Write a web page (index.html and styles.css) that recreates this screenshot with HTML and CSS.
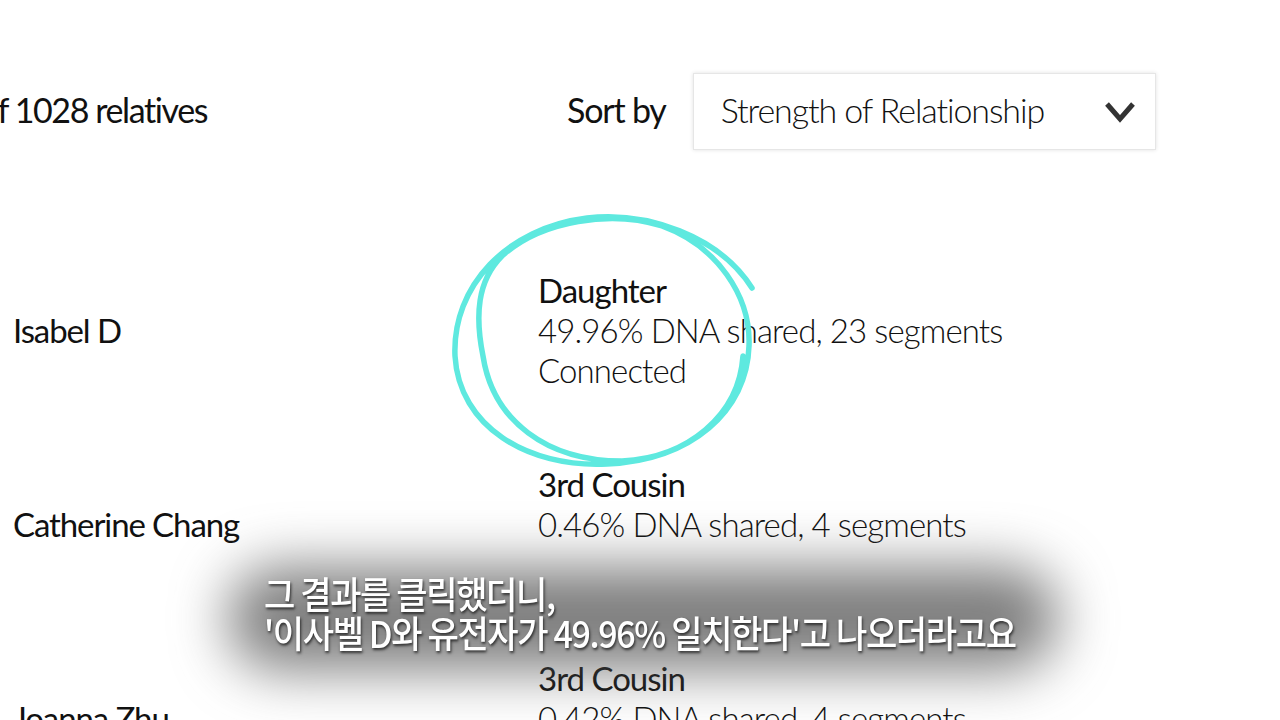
FILE: index.html
```html
<!DOCTYPE html>
<html lang="en">
<head>
<meta charset="utf-8">
<link rel="stylesheet" href="styles.css">
</head>
<body>
<div class="page">
  <header class="toolbar">
    <div class="count">of 1028 relatives</div>
    <div class="sort">
      <span class="sort-label">Sort by</span>
      <div class="select">
        <span class="select-value">Strength of Relationship</span>
        <svg class="chev" width="32" height="22" viewBox="0 0 32 22"><path d="M3 3 L16 18 L29 3" fill="none" stroke="#333" stroke-width="5" stroke-linejoin="miter"/></svg>
      </div>
    </div>
  </header>

  <main class="list">
    <div class="row">
      <div class="name">Isabel D</div>
      <div class="info">
        <div class="rel">Daughter</div>
        <div class="detail">49.96% DNA shared, 23 segments</div>
        <div class="detail">Connected</div>
      </div>
    </div>
    <div class="row">
      <div class="name">Catherine Chang</div>
      <div class="info">
        <div class="rel">3rd Cousin</div>
        <div class="detail">0.46% DNA shared, 4 segments</div>
      </div>
    </div>
    <div class="row">
      <div class="name">Joanna Zhu</div>
      <div class="info">
        <div class="rel">3rd Cousin</div>
        <div class="detail">0.42% DNA shared, 4 segments</div>
      </div>
    </div>
  </main>

  <svg class="scribble" width="340" height="290" viewBox="0 0 340 290">
    <path d="M305 82 C272 30 200 5 140 12 C60 22 5 80 8 150 C12 220 80 262 160 258 C245 254 300 205 302 140 C304 90 270 40 215 20 C165 4 95 14 55 50 C30 75 28 110 36 150 C46 215 100 255 175 255 C240 252 292 210 296 150" fill="none" stroke="#5ee9df" stroke-width="5.5" stroke-linecap="round"/>
  </svg>

  <div class="subtitle">
    <div class="sub-bg"></div>
    <div class="sub-text">
      <div>그 결과를 클릭했더니,</div>
      <div>'이사벨 D와 유전자가 49.96% 일치한다'고 나오더라고요</div>
    </div>
  </div>
</div>
</body>
</html>
```

FILE: styles.css
```css
html, body {
  margin: 0;
  padding: 0;
  background: #fff;
}
body {
  width: 1280px;
  height: 720px;
  overflow: hidden;
  font-family: "Lato", "Noto Sans", sans-serif;
  color: #111;
}
.page {
  position: relative;
  width: 1280px;
  height: 720px;
  overflow: hidden;
}
.toolbar {
  display: flex;
  align-items: center;
  padding-top: 73px;
  height: 77px;
}
.count {
  margin-left: -20px;
  font-size: 34px;
  font-weight: 400;
  letter-spacing: -1.4px;
  width: 587px;
  margin-top: -4px;
}
.sort {
  display: flex;
  align-items: center;
  gap: 27px;
}
.sort-label {
  font-size: 34px;
  font-weight: 400;
  letter-spacing: -1.2px;
  margin-top: -4px;
}
.select {
  box-sizing: border-box;
  width: 463px;
  height: 77px;
  border: 1px solid #e6e6e6;
  box-shadow: 0 0 4px rgba(0,0,0,0.12);
  display: flex;
  align-items: center;
  justify-content: space-between;
  padding: 0 19px 0 27px;
}
.select-value {
  font-size: 34px;
  font-weight: 300;
  letter-spacing: -1.1px;
  margin-top: -4px;
}
.chev { display: block; }
.list {
  margin-top: 120px;
}
.row {
  display: grid;
  grid-template-columns: 525px 1fr;
  height: 194px;
  padding-left: 13px;
}
.name {
  padding-top: 40px;
  line-height: 40px;
  font-size: 33px;
  font-weight: 400;
  letter-spacing: -1.1px;
}
.info {
  line-height: 40px;
  font-size: 33px;
  letter-spacing: -0.9px;
}
.rel {
  font-weight: 400;
  letter-spacing: -1px;
}
.detail {
  font-weight: 300;
}
.scribble {
  position: absolute;
  left: 447px;
  top: 206px;
}
.subtitle {
  position: absolute;
  left: 200px;
  top: 545px;
  width: 880px;
  height: 145px;
}
.sub-bg {
  position: absolute;
  left: 28px;
  top: 22px;
  right: 22px;
  bottom: 20px;
  background: rgba(80,80,80,0.74);
  filter: blur(28px);
  border-radius: 50px;
}
.sub-text {
  position: absolute;
  left: 64px;
  top: 29px;
  font-family: "Noto Sans CJK KR", sans-serif;
  font-weight: 500;
  font-size: 37px;
  line-height: 39px;
  color: #fff;
  letter-spacing: -1.5px;
  white-space: nowrap;
  transform: scaleX(0.92);
  transform-origin: left top;
  text-shadow: 1px 2px 3px rgba(0,0,0,0.7);
}
```
